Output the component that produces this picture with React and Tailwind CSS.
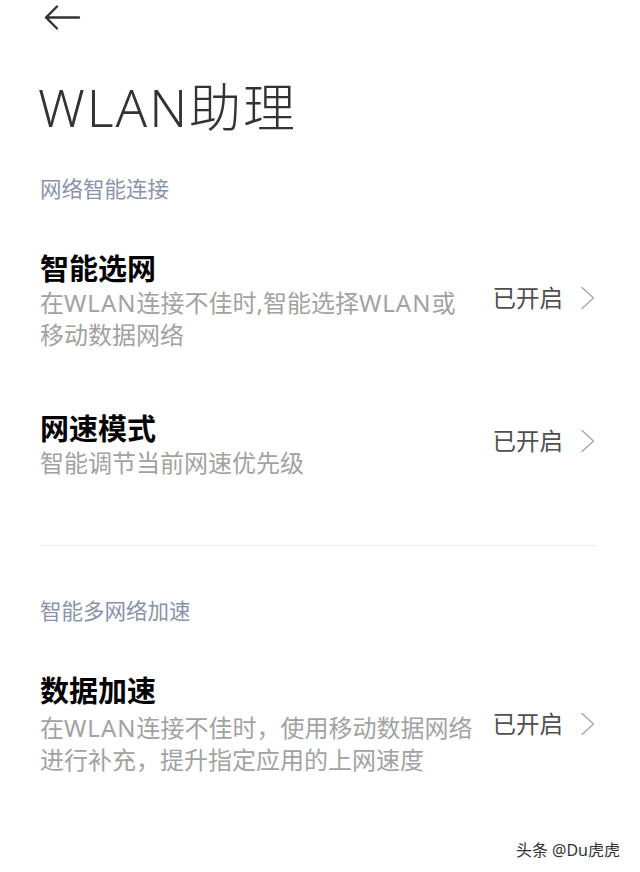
import React from "react";

const FONT = { fontFamily: '"Noto Sans", "Noto Sans CJK SC", sans-serif' };

function Chevron() {
  return (
    <svg width="16" height="24" viewBox="0 0 16 24" fill="none" className="shrink-0">
      <path d="M2 1.5 L13.5 12 L2 22.5" stroke="#a8a8a8" strokeWidth="1.4" strokeLinecap="round" strokeLinejoin="round" />
    </svg>
  );
}

function W() {
  return <span className="tracking-[1px]">WLAN</span>;
}

function Row({ title, lines, className = "", rightClass = "", subClass = "" }) {
  return (
    <div className={"flex items-center justify-between " + className}>
      <div className="flex flex-col">
        <div className="text-[29px] leading-[36px] font-bold text-black whitespace-nowrap">{title}</div>
        <div className={"text-[24px] leading-[32px] text-[#a2a2a2] whitespace-nowrap " + subClass}>
          {lines.map((l, i) => (
            <div key={i}>{l}</div>
          ))}
        </div>
      </div>
      <div className={"flex items-center gap-[17px] " + rightClass}>
        <span className="text-[23.5px] leading-[30px] text-[#4f4f4f] whitespace-nowrap">已开启</span>
        <Chevron />
      </div>
    </div>
  );
}

export default function App() {
  return (
    <div className="relative w-[640px] h-[872px] bg-white overflow-hidden" style={FONT}>
      <div className="h-[76px] pl-[44px] pt-[5px]">
        <svg width="37" height="26" viewBox="0 0 37 26" fill="none">
          <path d="M13 1.5 L2 12.5 L13 23.5 M2 12.5 L35 12.5" stroke="#333333" strokeWidth="2.4" strokeLinecap="round" strokeLinejoin="round" />
        </svg>
      </div>
      <div className="pl-[38px] pr-[44px]">
        <div className="text-[52px] leading-[62px] font-light text-[#333333] tracking-[2px]">WLAN助理</div>
        <div className="pl-[2px]">
          <div className="mt-[36px] text-[21.5px] leading-[30px] text-[#8a92aa]">网络智能连接</div>
          <Row
            className="mt-[47px]"
            rightClass="mb-[6px]"
            title="智能选网"
            lines={[
              <>在<W />连接不佳时,智能选择<W />或</>,
              "移动数据网络",
            ]}
          />
          <Row className="mt-[60px]" rightClass="mb-[8px]" title="网速模式" lines={["智能调节当前网速优先级"]} />
          <div className="mt-[66px] h-px bg-[#ebebeb]" />
          <div className="mt-[50px] text-[21.5px] leading-[30px] text-[#8a92aa]">智能多网络加速</div>
          <Row
            className="mt-[47px]"
            rightClass="mb-[2px]"
            subClass="mt-[3px]"
            title="数据加速"
            lines={[
              <>在<W />连接不佳时，使用移动数据网络</>,
              "进行补充，提升指定应用的上网速度",
            ]}
          />
        </div>
      </div>
      <div
        className="absolute right-[20px] bottom-[12px] text-[16px] leading-[20px] text-[#333333]"
        style={{ textShadow: "0 0 2px #fff, 0 0 2px #fff" }}
      >
        头条 @Du虎虎
      </div>
    </div>
  );
}
